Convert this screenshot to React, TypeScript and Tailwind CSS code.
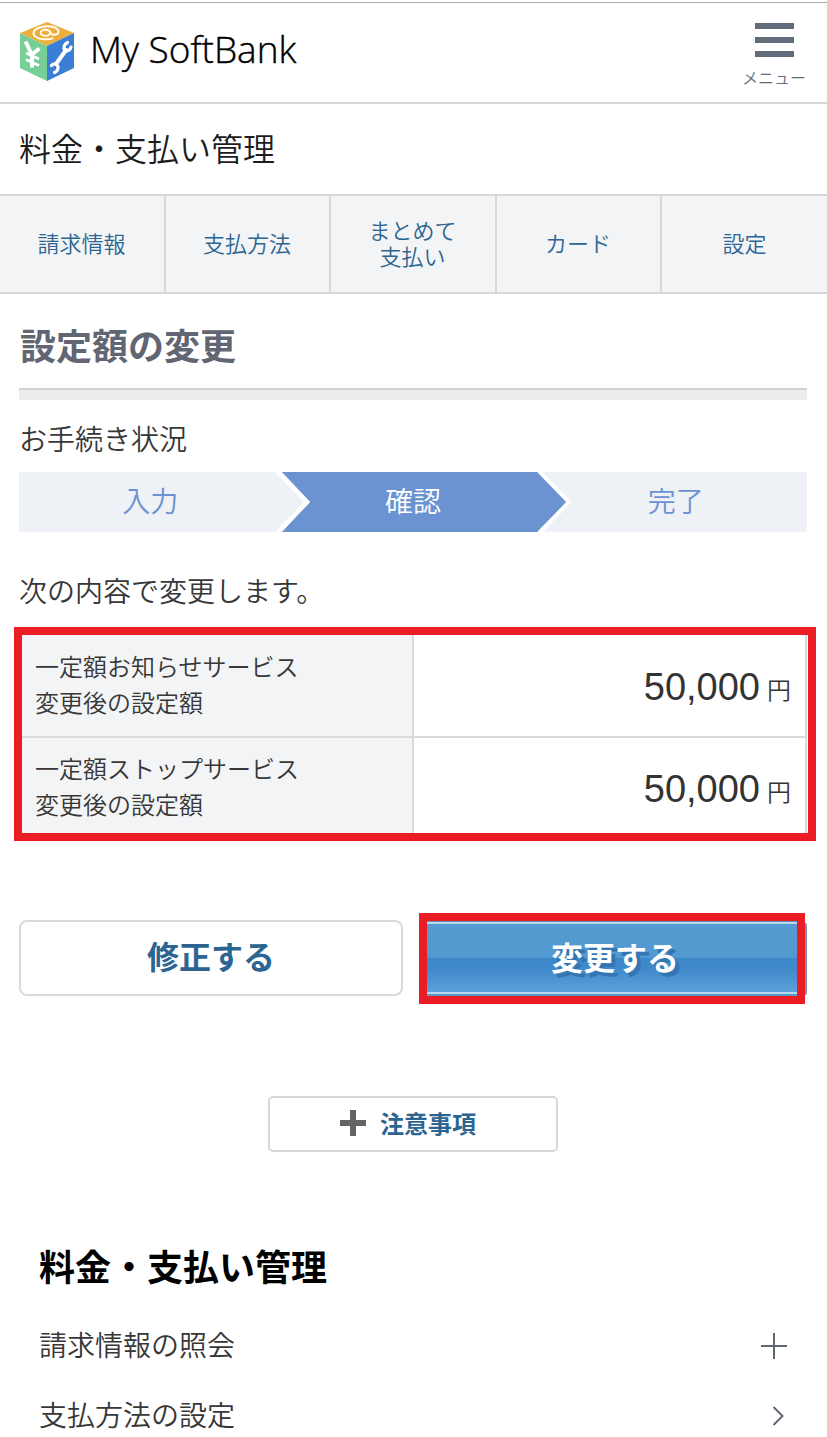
import React from 'react'

interface Tab {
  id: string
  lines: string[]
}

interface Setting {
  id: string
  label: string
  amount: string
}

const tabs: Tab[] = [
  { id: 'billing', lines: ['請求情報'] },
  { id: 'method', lines: ['支払方法'] },
  { id: 'matomete', lines: ['まとめて', '支払い'] },
  { id: 'card', lines: ['カード'] },
  { id: 'settings', lines: ['設定'] },
]

const settings: Setting[] = [
  { id: 'notice', label: '一定額お知らせサービス', amount: '50,000' },
  { id: 'stop', label: '一定額ストップサービス', amount: '50,000' },
]

function CubeLogo() {
  return (
    <svg className="h-[60px] w-[56px]" viewBox="0 0 56 60" fill="none">
      <path d="M28 0 55 11 28 24 1 11Z" fill="#edae3c" />
      <path d="M1 11 28 24V59L1 46Z" fill="#77cf98" />
      <path d="M55 11 28 24V59L55 46Z" fill="#3a7fd5" />
      {/* at mark */}
      <g stroke="#fffdf0" strokeLinecap="round">
        <ellipse cx="26.5" cy="10.8" rx="4.8" ry="3" strokeWidth="2" />
        <path d="M31.5 10.5C32.5 14 40 13.2 39.5 9.4 38.5 4.6 30 3.2 22.5 5 14 7 12.5 12 17 15 21 17.6 29 18 33.5 16.4" strokeWidth="2" />
      </g>
      {/* yen mark */}
      <g stroke="#fff">
        <path d="M6.5 19.5 12.8 32.5 20.5 26.5M13 31.5V45.5" strokeWidth="4" />
        <path d="M7 31 20 37M7 37.5 20 43.5" strokeWidth="3" />
      </g>
      {/* wrench */}
      <g stroke="#fff" strokeLinecap="round" strokeLinejoin="round">
        <path d="M37 42 47 28" strokeWidth="4" />
        <path d="M48.5 20.5C44.8 22.5 44 26 46 28.5 48.5 29.5 51.5 28 52 25" strokeWidth="3.2" />
        <path d="M32.5 43.5C35 41 38 41.5 39 44.5 39.2 47 38 49.5 35.5 50.5" strokeWidth="3.2" />
      </g>
    </svg>
  )
}

function Header() {
  return (
    <header className="flex h-[104px] justify-between border-b-2 border-[#d5d6d6] bg-white">
      <div className="mt-0.5 flex w-full justify-between border-t border-[#acacac]">
        <div className="flex pt-[19px] pl-[19px]">
          <CubeLogo />
          <span className="-mt-px ml-[15px] whitespace-nowrap font-['Open_Sans'] text-[37px] leading-[56px] font-light text-black [-webkit-text-stroke:0.4px_#000]">
            My SoftBank
          </span>
        </div>
        <button className="mr-[22px] flex w-[62px] flex-col items-center pt-5 text-[#626d7b]">
          <span className="flex w-[39px] flex-col gap-2">
            <span className="h-1.5 bg-[#626d7b]" />
            <span className="h-1.5 bg-[#626d7b]" />
            <span className="h-1.5 bg-[#626d7b]" />
          </span>
          <span className="mt-2.5 text-base leading-6 whitespace-nowrap">メニュー</span>
        </button>
      </div>
    </header>
  )
}

function TabBar() {
  return (
    <nav className="grid h-[100px] grid-cols-[166px_165px_166px_165px_1fr] border-y-2 border-[#d7d9d9] bg-[#f3f4f6]">
      {tabs.map((tab) => (
        <a
          key={tab.id}
          className="flex flex-col items-center justify-center border-r-2 border-[#d7d9d9] pt-0.5 pr-px text-[22px] leading-[26px] text-[#2c6591] last:border-r-0 last:pr-0"
        >
          {tab.lines.map((line) => (
            <span key={line}>{line}</span>
          ))}
        </a>
      ))}
    </nav>
  )
}

function Steps() {
  return (
    <div className="relative mt-3 h-[60px] w-[788px] bg-[#eef1f6]">
      <svg className="absolute inset-0 h-[60px] w-[788px]" viewBox="0 0 788 60" fill="none">
        <path d="M263 0H521L550 30 521 60H263L291 30Z" fill="#6b93d1" />
        <path d="M258 -1 288 30 258 61" stroke="#fff" strokeWidth="4.5" />
        <path d="M520 -1 550 30 520 61" stroke="#fff" strokeWidth="4" />
      </svg>
      <ol className="relative grid h-full grid-cols-3 text-center text-[28px] leading-[62px] text-[#6b93d1]">
        <li>入力</li>
        <li className="text-white">確認</li>
        <li>完了</li>
      </ol>
    </div>
  )
}

export default function App() {
  return (
    <div className="h-[1437px] w-[827px] overflow-hidden bg-white font-['Liberation_Sans','Noto_Sans_CJK_JP',sans-serif] font-[350] text-[#373737]">
      <Header />
      <h1 className="h-[90px] pl-[19px] text-[32px] leading-[93px] text-[#1c1c1c]">料金・支払い管理</h1>
      <TabBar />

      <main className="pl-[19px]">
        <h2 className="h-[94px] pl-px text-4xl leading-[108px] font-bold text-[#616672]">設定額の変更</h2>
        <div className="h-3 w-[788px] border-t-2 border-[#d0d1d1] bg-[#ededed]" />
        <p className="mt-[22px] text-[28px] leading-[38px]">お手続き状況</p>
        <Steps />
        <p className="mt-[42px] text-[28px] leading-[38px]">次の内容で変更します。</p>

        {/* New amounts */}
        <div className="mt-[15px] -ml-[5px] h-[214px] w-[802px] border-8 border-[#ec1c24] pr-px">
          {settings.map((item) => (
            <div key={item.id} className="group flex h-[103px] border-b-2 border-[#d9dadb] last:h-[95px] last:border-b-0">
              <div className="w-[392px] border-r-2 border-[#d9dadb] bg-[#f3f4f6] pt-[15px] pl-[13px] text-2xl leading-9 group-last:pt-3.5">
                {item.label}
                <br />
                変更後の設定額
              </div>
              <div className="flex flex-1 items-baseline justify-end border-r-2 border-[#d9dadb] pt-6 pr-3.5 group-last:pt-[23px]">
                <span className="text-[38px] leading-[56px] text-[#333]">{item.amount}</span>
                <span className="relative -top-px ml-[7px] text-2xl">円</span>
              </div>
            </div>
          ))}
        </div>

        <div className="mt-[72px] flex h-[91px]">
          <button className="mt-[7px] h-[76px] w-[384px] rounded-lg border-2 border-[#d9dadb] text-[32px] leading-[73px] font-bold text-[#2c6591]">
            修正する
          </button>
          <div className="ml-4 w-[386px] border-8 border-[#ec1c24]">
            <button className="h-[75px] w-full border-t border-b-2 border-[#559bc8] text-white">
              <span className="block h-[72px] border-y-2 border-[#b9d8ee] bg-[linear-gradient(to_bottom,#559bd2_0%,#5199cf_50%,#3c87c8_50%,#4089ca_65%,#5ba1d8_100%)] pl-1.5 text-[32px] leading-[70px] font-bold [text-shadow:4px_4px_0_#3475b2]">
                変更する
              </span>
            </button>
          </div>
          <div className="mt-2.5 h-[72px] w-0.5 rounded-r bg-[#7d8fb8]" />
        </div>

        <button className="mt-[92px] ml-[249px] flex h-14 w-[290px] items-center rounded-[5px] border-2 border-[#d7d8d9] pl-[70px] text-2xl leading-[52px] font-bold text-[#2c6591]">
          <svg className="mr-3.5 mb-0.5 h-[26px] w-[26px]" viewBox="0 0 26 26">
            <path d="M10 0h6v10h10v6H16v10h-6V16H0v-6h10Z" fill="#646464" />
          </svg>
          <span className="pt-0.5">注意事項</span>
        </button>
      </main>

      <section className="mt-[90px] pr-10 pl-[39px]">
        <h2 className="text-4xl leading-[54px] font-bold text-black">料金・支払い管理</h2>
        <ul className="mt-[15px] text-[28px]">
          <li className="flex h-[70px] items-center justify-between">
            <span className="pt-0.5">請求情報の照会</span>
            <svg className="h-[26px] w-[26px]" viewBox="0 0 26 26">
              <path d="M13 0V26M0 13H26" stroke="#5f6874" strokeWidth="2" />
            </svg>
          </li>
          <li className="flex h-[70px] items-center justify-between">
            <span className="pt-0.5">支払方法の設定</span>
            <svg className="mr-[3px] h-5 w-3" viewBox="0 0 12 20" fill="none">
              <path d="M1.5 1 10.5 10 1.5 19" stroke="#5f6874" strokeWidth="2" />
            </svg>
          </li>
        </ul>
      </section>
    </div>
  )
}
